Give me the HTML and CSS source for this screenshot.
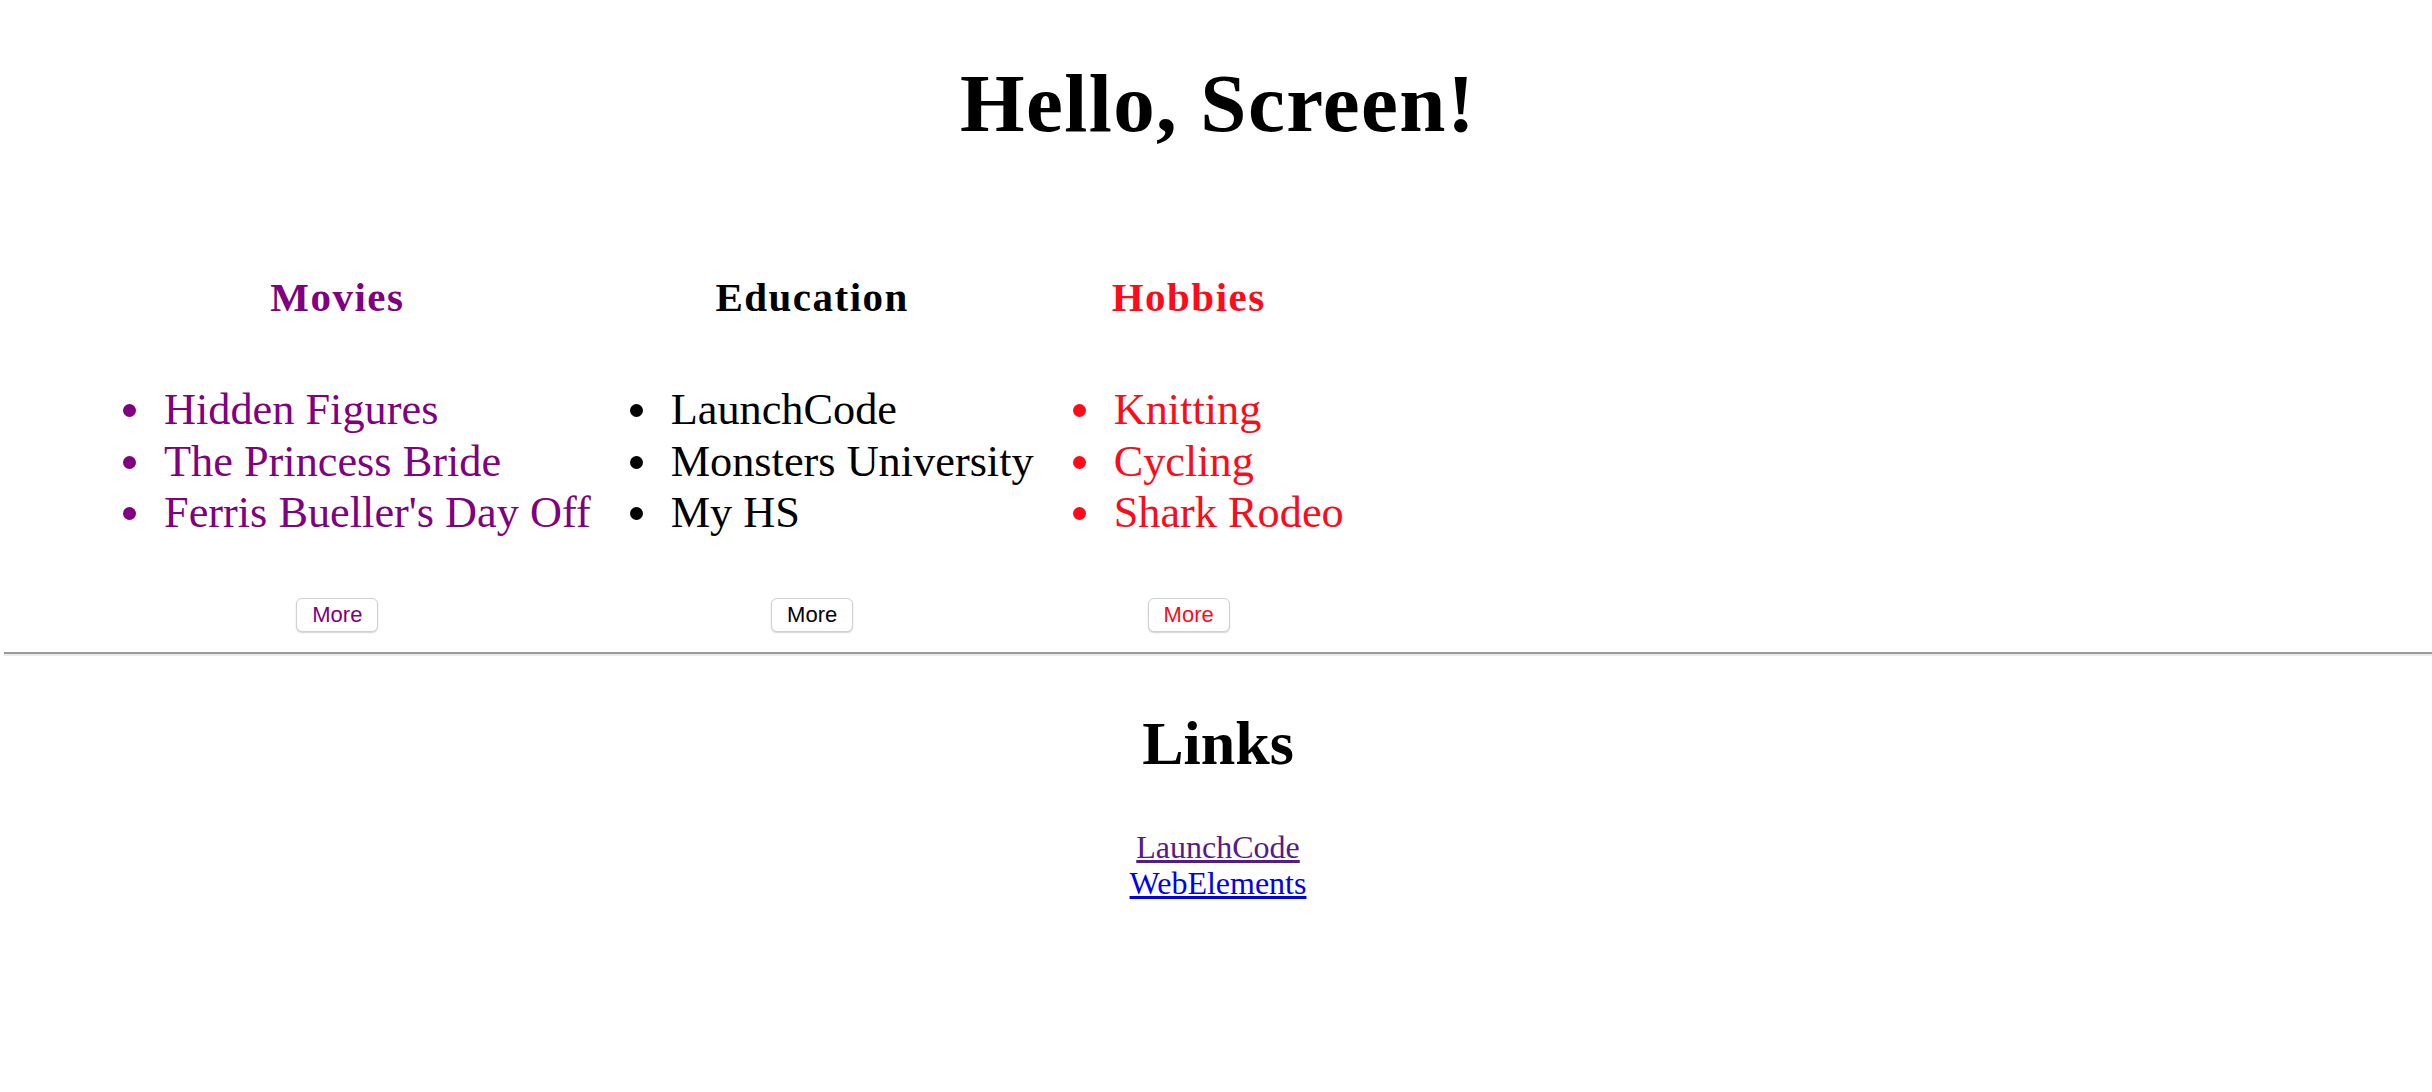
FILE: index.html
```html
<!DOCTYPE html>
<html>
<head>
<meta charset="utf-8">
<title>Hello, Screen!</title>
<link rel="stylesheet" href="styles.css">
</head>
<body>
<h1 class="title">Hello, Screen!</h1>
<div class="columns">
  <div class="col movies">
    <h3 class="col-title">Movies</h3>
    <ul class="items">
      <li>Hidden Figures</li>
      <li>The Princess Bride</li>
      <li>Ferris Bueller's Day Off</li>
    </ul>
    <div class="btn-row"><button class="more">More</button></div>
  </div>
  <div class="col education">
    <h3 class="col-title">Education</h3>
    <ul class="items">
      <li>LaunchCode</li>
      <li>Monsters University</li>
      <li>My HS</li>
    </ul>
    <div class="btn-row"><button class="more">More</button></div>
  </div>
  <div class="col hobbies">
    <h3 class="col-title">Hobbies</h3>
    <ul class="items">
      <li>Knitting</li>
      <li>Cycling</li>
      <li>Shark Rodeo</li>
    </ul>
    <div class="btn-row"><button class="more">More</button></div>
  </div>
</div>
<hr class="divider">
<h1 class="links-title">Links</h1>
<div class="links">
  <a class="link visited" href="#launchcode">LaunchCode</a><br>
  <a class="link" href="#webelements">WebElements</a>
</div>
</body>
</html>
```

FILE: styles.css
```css
html, body {
  margin: 0;
  padding: 0;
  background: #ffffff;
}

body {
  font-family: "Liberation Serif", "Times New Roman", serif;
  color: #000000;
  padding: 0 0 0 4px;
}

.title {
  margin: 56px 0 0 0;
  font-size: 83px;
  line-height: 95px;
  letter-spacing: 1.4px;
  font-weight: bold;
  text-align: center;
}

.columns {
  display: flex;
  align-items: flex-start;
  padding-left: 80px;
  margin-top: 123px;
}

.col {
  flex: none;
  display: flex;
  flex-direction: column;
}

.col-title {
  margin: 0;
  font-size: 41px;
  line-height: 46px;
  letter-spacing: 1.5px;
  font-weight: bold;
  text-align: center;
}

.items {
  margin: 64px 0 0 0;
  padding-left: 72px;
  font-size: 44.3px;
  line-height: 51.7px;
  list-style: disc;
}

.items li {
  padding-left: 8px;
}

.btn-row {
  display: flex;
  justify-content: center;
  margin-top: 59px;
}

.more {
  width: 82px;
  height: 34px;
  padding: 0;
  background: #ffffff;
  border: 1px solid #d0d0d0;
  border-radius: 6px;
  box-shadow: 0 1px 1.5px rgba(0, 0, 0, 0.18);
  font-family: "Liberation Sans", Arial, sans-serif;
  font-size: 22px;
  line-height: 32px;
  color: inherit;
}

.movies { color: #800080; }
.education { color: #000000; }
.hobbies { color: #fd0b1a; }

.divider {
  margin: 20px 0 0 0;
  height: 0;
  border: none;
  border-top: 2px solid #9a9a9a;
  border-bottom: 2px solid #ececec;
}

.links-title {
  margin: 51px 0 0 0;
  font-size: 62px;
  line-height: 72px;
  font-weight: bold;
  text-align: center;
}

.links {
  margin-top: 50px;
  text-align: center;
  font-size: 32px;
  line-height: 36px;
}

.link {
  color: #0000ee;
  text-decoration: underline;
}

.link.visited {
  color: #551a8b;
}
```
